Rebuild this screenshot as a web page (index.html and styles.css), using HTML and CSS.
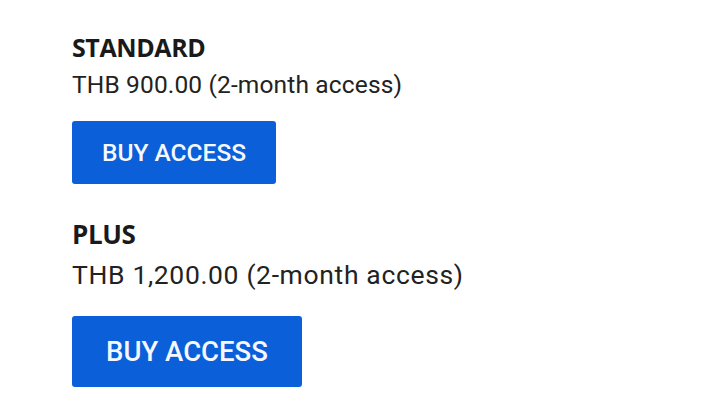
FILE: index.html
```html
<!DOCTYPE html>
<html>
<head>
<meta charset="utf-8">
<link rel="stylesheet" href="styles.css">
</head>
<body>
<main class="plans">
  <section class="plan plan-standard">
    <h2 class="plan-name">STANDARD</h2>
    <p class="plan-price">THB 900.00 (2-month access)</p>
    <button class="buy">BUY ACCESS</button>
  </section>
  <section class="plan plan-plus">
    <h2 class="plan-name">PLUS</h2>
    <p class="plan-price">THB 1,200.00 (2-month access)</p>
    <button class="buy">BUY ACCESS</button>
  </section>
</main>
</body>
</html>
```
FILE: styles.css
```css
html, body {
  margin: 0;
  padding: 0;
  background: #ffffff;
}
.plans {
  display: flex;
  flex-direction: column;
  padding: 31px 0 0 72px;
}
.plan {
  display: flex;
  flex-direction: column;
  align-items: flex-start;
}
.plan-name {
  margin: 0;
  font-family: "Open Sans", sans-serif;
  font-weight: 700;
  font-size: 25px;
  line-height: 32px;
  color: #1a1a1a;
  letter-spacing: -0.4px;
}
.plan-price {
  margin: 6px 0 0;
  font-family: Roboto, sans-serif;
  font-size: 24.5px;
  line-height: 32px;
  letter-spacing: 0.15px;
  color: #222222;
}
.buy {
  margin-top: 20px;
  border: none;
  border-radius: 3px;
  background: #0b5fd8;
  color: #f4f8ff;
  font-family: Roboto, sans-serif;
  font-weight: 500;
  font-size: 24.5px;
  width: 204px;
  height: 63px;
  padding: 0;
}
.plan-plus {
  margin-top: 34px;
}
.plan-plus .plan-name {
  font-size: 26px;
}
.plan-plus .plan-price {
  font-size: 26.5px;
  letter-spacing: 0.65px;
  margin-top: 9px;
}
.plan-plus .buy {
  width: 230px;
  height: 71px;
  font-size: 27.5px;
  margin-top: 25px;
}
```
